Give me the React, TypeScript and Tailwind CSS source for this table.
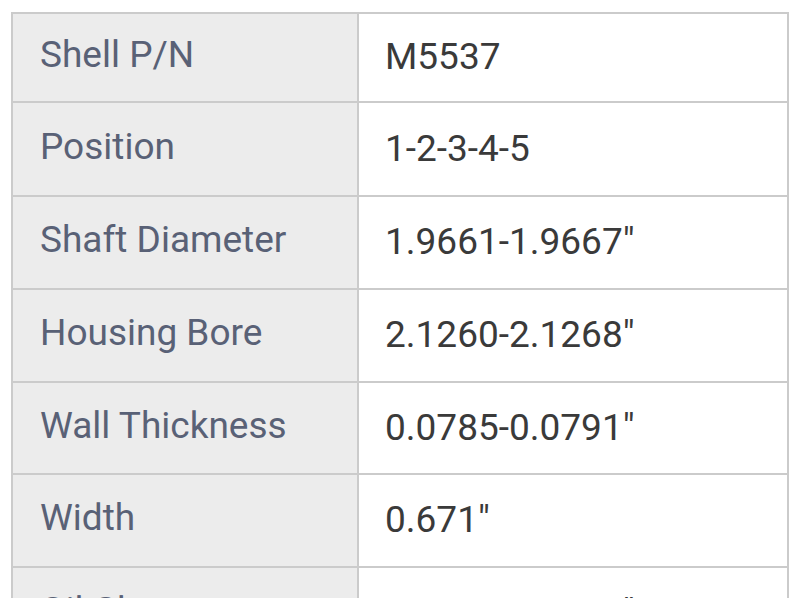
const rows: { label: string; value: string; h: string }[] = [
    { label: 'Shell P/N', value: 'M5537', h: 'h-[87px]' },
    { label: 'Position', value: '1-2-3-4-5', h: 'h-[94px]' },
    { label: 'Shaft Diameter', value: '1.9661-1.9667"', h: 'h-[93px]' },
    { label: 'Housing Bore', value: '2.1260-2.1268"', h: 'h-[93px]' },
    { label: 'Wall Thickness', value: '0.0785-0.0791"', h: 'h-[92px]' },
    { label: 'Width', value: '0.671"', h: 'h-[93px]' },
    { label: 'Oil Clearance', value: '0.0020-0.0047"', h: 'h-[93px]' }
]

export default function App() {
    return (
        <div className="w-[800px] h-[598px] overflow-hidden bg-white font-['Roboto',sans-serif]">
            <div className="ml-[11px] mt-[12px] w-[778px] border-2 border-[#cbcbcb]">
                {rows.map((row, i) => (
                    <div
                        key={row.label}
                        className={`flex ${row.h} ${i > 0 ? 'border-t-2 border-[#cbcbcb]' : ''}`}
                    >
                        <div className="w-[346px] shrink-0 bg-[#ececec] border-r-2 border-[#cbcbcb] pl-[27px] flex items-center pb-[6px] text-[37px] leading-none text-[#596176]">
                            {row.label}
                        </div>
                        <div className="flex-1 bg-white pl-[26px] flex items-center pb-[2px] text-[37px] leading-none text-[#3a3a3a]">
                            {row.value}
                        </div>
                    </div>
                ))}
            </div>
        </div>
    )
}
